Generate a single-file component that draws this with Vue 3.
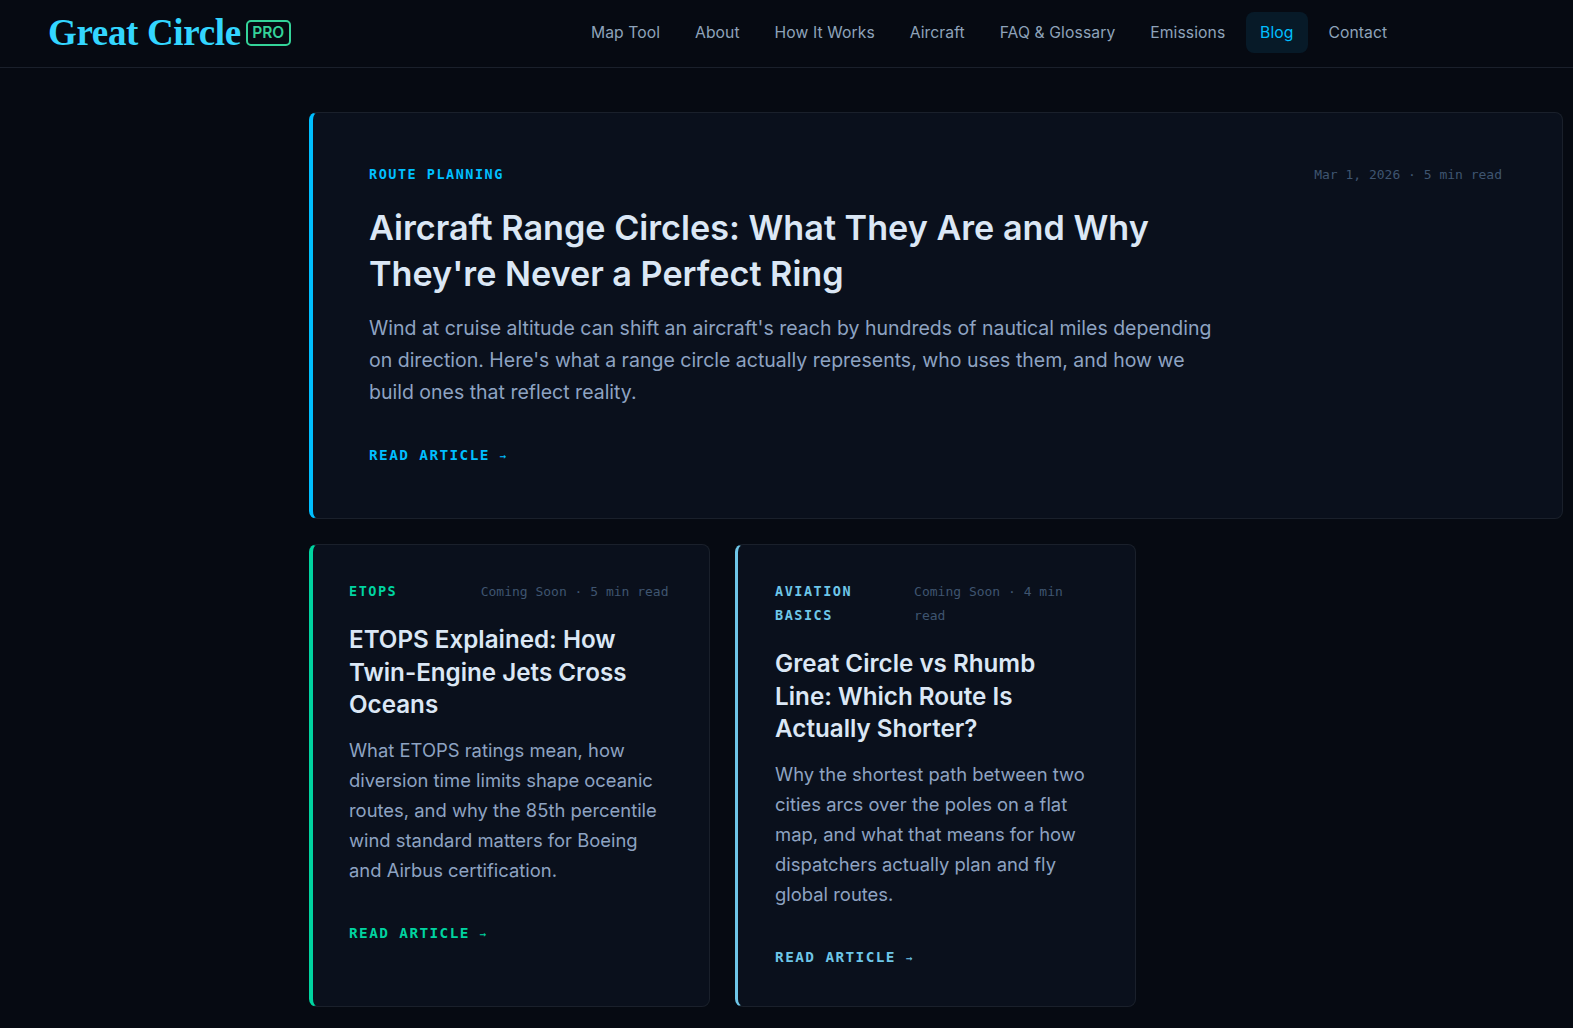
<template>
  <div class="page">
    <header class="topbar">
      <a class="brand" href="#">
        <span class="brand__name">Great Circle</span>
        <span class="brand__pro">PRO</span>
      </a>
      <nav class="topnav">
        <a
          v-for="link in links"
          :key="link"
          class="topnav__link"
          :class="{ 'topnav__link--active': link === 'Blog' }"
          href="#"
        >
          {{ link }}
        </a>
      </nav>
    </header>

    <main class="content">
      <article class="post post--featured">
        <div class="post__meta">
          <span class="post__tag">ROUTE PLANNING</span>
          <span class="post__date">Mar 1, 2026 · 5 min read</span>
        </div>
        <h2 class="post__title">Aircraft Range Circles: What They Are and Why They're Never a Perfect Ring</h2>
        <p class="post__text">
          Wind at cruise altitude can shift an aircraft's reach by hundreds of nautical miles depending on direction. Here's what a range circle actually represents, who uses them, and how we build ones that reflect reality.
        </p>
        <a class="post__link" href="#">READ ARTICLE <span class="post__arrow">→</span></a>
      </article>

      <div class="post-grid">
        <article
          v-for="post in posts"
          :key="post.title"
          class="post"
          :class="`post--${post.tone}`"
        >
          <div class="post__meta">
            <span class="post__tag">{{ post.tag }}</span>
            <span class="post__date">{{ post.date }}</span>
          </div>
          <h3 class="post__title">{{ post.title }}</h3>
          <p class="post__text">{{ post.text }}</p>
          <a class="post__link" href="#">READ ARTICLE <span class="post__arrow">→</span></a>
        </article>
      </div>
    </main>
  </div>
</template>

<script setup>
const links = ['Map Tool', 'About', 'How It Works', 'Aircraft', 'FAQ & Glossary', 'Emissions', 'Blog', 'Contact']

const posts = [
  {
    tone: 'green',
    tag: 'ETOPS',
    date: 'Coming Soon · 5 min read',
    title: 'ETOPS Explained: How Twin-Engine Jets Cross Oceans',
    text: 'What ETOPS ratings mean, how diversion time limits shape oceanic routes, and why the 85th percentile wind standard matters for Boeing and Airbus certification.'
  },
  {
    tone: 'sky',
    tag: 'AVIATION BASICS',
    date: 'Coming Soon · 4 min read',
    title: 'Great Circle vs Rhumb Line: Which Route Is Actually Shorter?',
    text: 'Why the shortest path between two cities arcs over the poles on a flat map, and what that means for how dispatchers actually plan and fly global routes.'
  }
]
</script>

<style>
html,
body {
  margin: 0;
  background: #060a12;
}
</style>

<style scoped>
.page {
  min-height: 1028px;
  overflow: hidden;
  background: #060a12;
  font-family: 'Inter', 'Liberation Sans', sans-serif;
}

.topbar {
  display: flex;
  align-items: center;
  box-sizing: content-box;
  height: 65px;
  padding: 0 48px 2px;
  border-bottom: 1px solid #1a202b;
}

.brand {
  display: flex;
  flex: 0 0 auto;
  align-items: center;
  gap: 5px;
  width: 528.5px;
  text-decoration: none;
}

.brand__name {
  font-family: 'Liberation Serif', serif;
  font-size: 37px;
  font-weight: 700;
  letter-spacing: -0.35px;
  color: #33d6ff;
}

.brand__pro {
  padding: 2px 4.5px;
  border: 2px solid #34d399;
  border-radius: 5px;
  font-size: 15.5px;
  font-weight: 600;
  line-height: 18px;
  color: #34d399;
}

.topnav {
  display: flex;
  align-items: center;
  gap: 6px;
}

.topnav__link {
  padding: 10px 14.4px;
  border-radius: 8px;
  font-size: 15.7px;
  letter-spacing: 0.1px;
  line-height: 21px;
  color: #8ea3ba;
  text-decoration: none;
}

.topnav__link--active {
  background: #071a28;
  color: #00bfff;
}

.content {
  padding: 44px 10px 0 309px;
}

.post {
  --accent: #00bfff;
  box-sizing: border-box;
  padding: 35px 40px 0 37px;
  border: 1px solid #1a202b;
  border-left: 3px solid var(--accent);
  border-radius: 8px;
  background: #0a101c;
}

.post--featured {
  height: 407px;
  padding: 50px 60px 0 56px;
  border-left-width: 4px;
}

.post--green {
  --accent: #00d4a0;
  padding-left: 36px;
  border-left-width: 4px;
}

.post--sky {
  --accent: #6ec6e8;
}

.post__meta {
  display: flex;
  justify-content: space-between;
  gap: 16px;
  font-family: 'DejaVu Sans Mono', 'Liberation Mono', monospace;
  font-size: 13px;
  line-height: 24px;
}

.post__tag {
  margin-top: -1px;
  font-size: 13.5px;
  font-weight: 700;
  letter-spacing: 1.5px;
  color: var(--accent);
}

.post__date {
  color: #3f5570;
}

.post--sky .post__tag {
  flex: 0 0 123px;
}

.post--sky .post__date {
  flex: 1;
}

.post__title {
  margin: 20px 0 13px;
  font-size: 24.2px;
  font-weight: 600;
  line-height: 32.5px;
  color: #dbe7f5;
}

.post--featured .post__title {
  max-width: 850px;
  margin: 18px 0 15px;
  font-size: 34.2px;
  line-height: 46px;
}

.post__text {
  margin: 0 0 37px;
  font-size: 18.4px;
  line-height: 30px;
  color: #8ea3c2;
}

.post--featured .post__text {
  max-width: 850px;
  margin-bottom: 36px;
  font-size: 19.5px;
  line-height: 32px;
}

.post__link {
  font-family: 'DejaVu Sans Mono', 'Liberation Mono', monospace;
  font-size: 14.4px;
  font-weight: 700;
  letter-spacing: 1.4px;
  color: var(--accent);
  text-decoration: none;
}

.post__arrow {
  font-size: 11px;
  font-weight: 400;
}

.post-grid {
  display: grid;
  grid-template-columns: repeat(3, 400.5px);
  gap: 25.6px;
  margin-top: 25px;
}

.post-grid .post {
  height: 463px;
}
</style>
